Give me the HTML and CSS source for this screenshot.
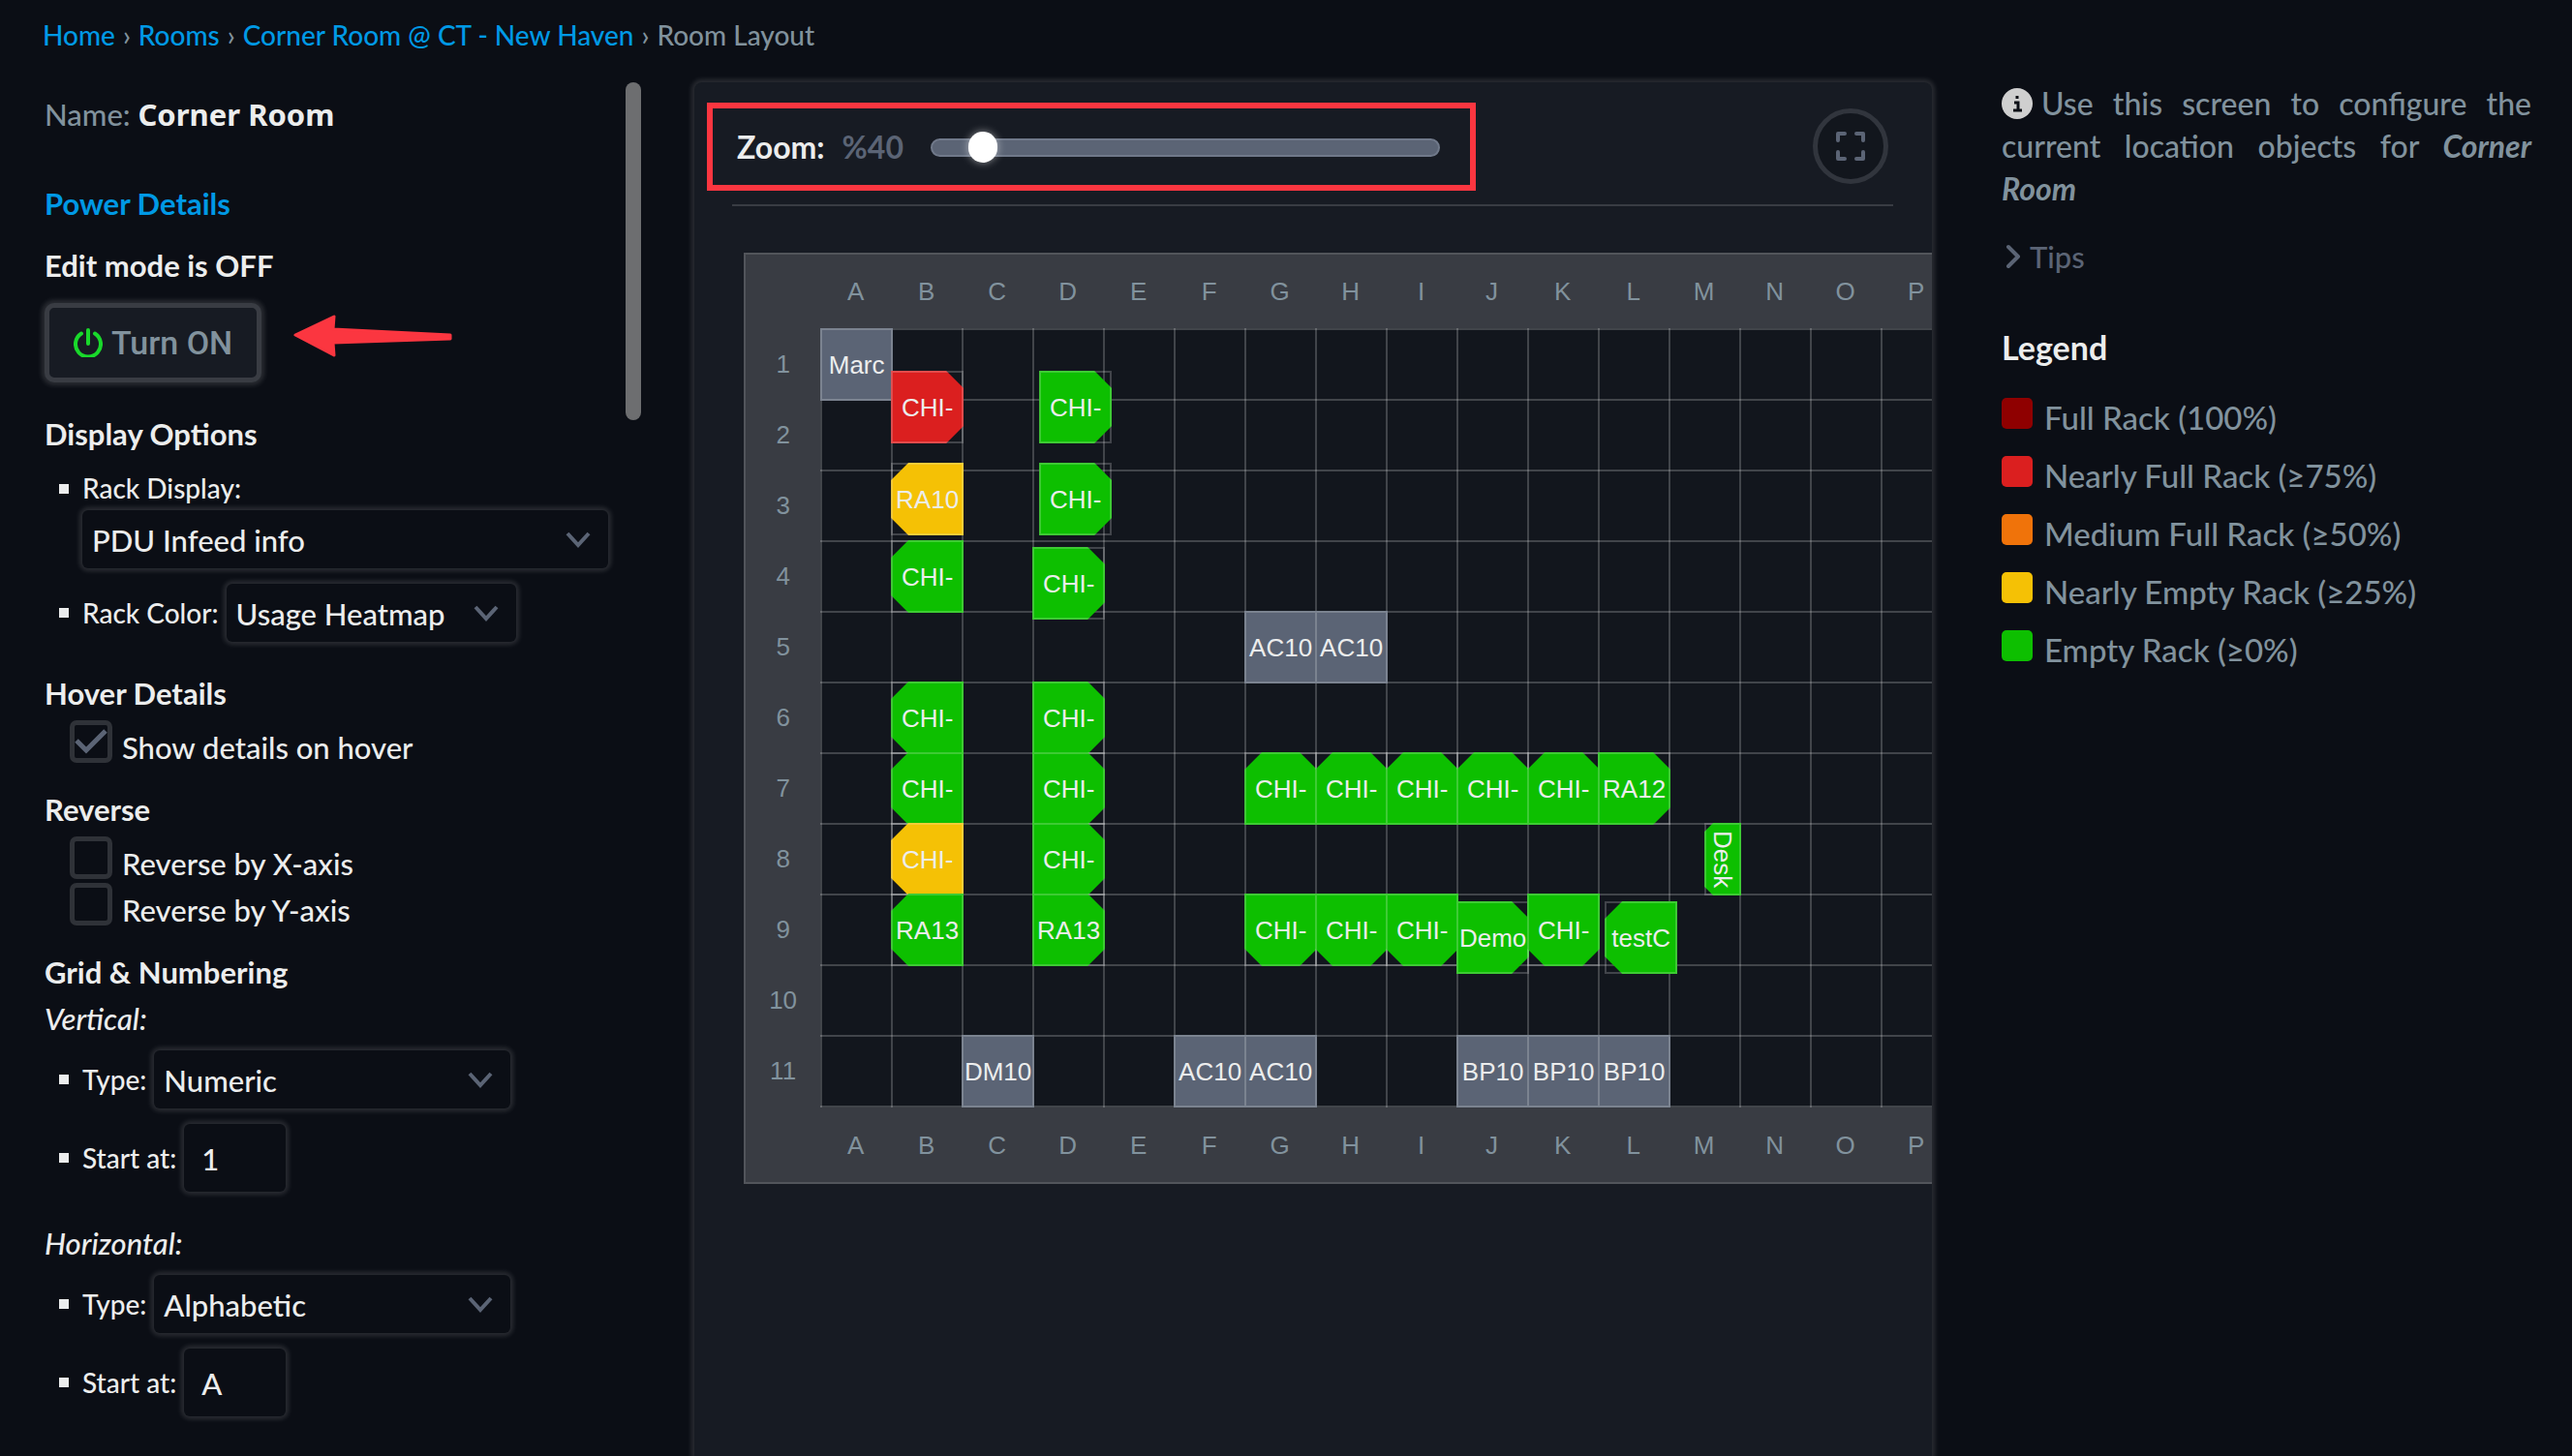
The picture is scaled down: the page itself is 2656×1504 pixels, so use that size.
FILE: index.html
```html
<!DOCTYPE html>
<html lang="en">
<head>
<meta charset="utf-8">
<title>Room Layout</title>
<link rel="stylesheet" href="styles.css">
</head>
<body>
<nav class="breadcrumb" aria-label="Breadcrumb">
  <a href="#home">Home</a><span>›</span><a href="#rooms">Rooms</a><span>›</span><a href="#room">Corner Room @ CT - New Haven</a><span>›</span><span>Room Layout</span>
</nav>

<main class="page">
  <aside class="sidebar">
    <div class="options">
      <p class="room-name">Name: <strong>Corner Room</strong></p>
      <a class="power-link" href="#power">Power Details</a>
      <p class="edit-state">Edit mode is OFF</p>
      <div class="edit-row">
        <button class="toggle-edit" type="button">
          <svg class="power-icon" viewBox="0 0 30 30" aria-hidden="true"><path d="M8 5.5a13 13 0 1 0 14 0M15 2v14"/></svg>
          Turn ON
        </button>
        <svg class="arrow" viewBox="0 0 166 44" aria-hidden="true"><path d="M2 21 42 2l-1 13 121 6v4L41 29l1 13Z"/></svg>
      </div>

      <h2>Display Options</h2>
      <div class="field stacked">
        <label for="rack-display">Rack Display:</label>
        <div class="select wide">
          <select id="rack-display"><option>PDU Infeed info</option></select>
          <svg class="chevron" viewBox="0 0 26 18" aria-hidden="true"><path d="m2 3 11 12L24 3"/></svg>
        </div>
      </div>
      <div class="field">
        <label for="rack-color">Rack Color:</label>
        <div class="select medium">
          <select id="rack-color"><option>Usage Heatmap</option></select>
          <svg class="chevron" viewBox="0 0 26 18" aria-hidden="true"><path d="m2 3 11 12L24 3"/></svg>
        </div>
      </div>

      <h2>Hover Details</h2>
      <div class="check"><input type="checkbox" id="hover" checked><label for="hover">Show details on hover</label></div>

      <h2 class="tight">Reverse</h2>
      <div class="check"><input type="checkbox" id="rev-x"><label for="rev-x">Reverse by X-axis</label></div>
      <div class="check"><input type="checkbox" id="rev-y"><label for="rev-y">Reverse by Y-axis</label></div>

      <h2 class="tight">Grid &amp; Numbering</h2>
      <h3>Vertical:</h3>
      <div class="field">
        <label for="v-type">Type:</label>
        <div class="select regular">
          <select id="v-type"><option>Numeric</option></select>
          <svg class="chevron" viewBox="0 0 26 18" aria-hidden="true"><path d="m2 3 11 12L24 3"/></svg>
        </div>
      </div>
      <div class="field">
        <label for="v-start">Start at:</label>
        <input class="start" type="text" id="v-start" value="1">
      </div>
      <h3 class="second">Horizontal:</h3>
      <div class="field">
        <label for="h-type">Type:</label>
        <div class="select regular">
          <select id="h-type"><option>Alphabetic</option></select>
          <svg class="chevron" viewBox="0 0 26 18" aria-hidden="true"><path d="m2 3 11 12L24 3"/></svg>
        </div>
      </div>
      <div class="field">
        <label for="h-start">Start at:</label>
        <input class="start" type="text" id="h-start" value="A">
      </div>
    </div>
    <div class="scroll-thumb"></div>
  </aside>

  <section class="panel" aria-label="Room layout">
    <div class="toolbar">
      <div class="zoom">
        <label for="zoom">Zoom:</label>
        <output for="zoom">%40</output>
        <input type="range" id="zoom" min="25" max="225" value="40">
      </div>
      <button class="fullscreen" type="button" aria-label="Full screen">
        <svg viewBox="0 0 30 30" aria-hidden="true"><path d="M2 9V2h7M21 2h7v7M28 21v7h-7M9 28H2v-7"/></svg>
      </button>
    </div>

    <div class="plan">
      <div class="axis columns"><span>A</span><span>B</span><span>C</span><span>D</span><span>E</span><span>F</span><span>G</span><span>H</span><span>I</span><span>J</span><span>K</span><span>L</span><span>M</span><span>N</span><span>O</span><span>P</span></div>
      <div class="axis rows"><span>1</span><span>2</span><span>3</span><span>4</span><span>5</span><span>6</span><span>7</span><span>8</span><span>9</span><span>10</span><span>11</span></div>
      <div class="floor">
        <div class="item device" style="left:0px;top:0px"><span>Marc</span></div>
        <div class="item red east" style="left:73px;top:44px"><span>CHI-</span></div>
        <div class="item green east" style="left:226px;top:44px"><span>CHI-</span></div>
        <div class="item yellow west" style="left:73px;top:139px"><span>RA10</span></div>
        <div class="item green east" style="left:226px;top:139px"><span>CHI-</span></div>
        <div class="item green west" style="left:73px;top:219px"><span>CHI-</span></div>
        <div class="item green east" style="left:219px;top:226px"><span>CHI-</span></div>
        <div class="item device" style="left:438px;top:292px"><span>AC10</span></div>
        <div class="item device" style="left:511px;top:292px"><span>AC10</span></div>
        <div class="item green west" style="left:73px;top:365px"><span>CHI-</span></div>
        <div class="item green west" style="left:73px;top:438px"><span>CHI-</span></div>
        <div class="item yellow west" style="left:73px;top:511px"><span>CHI-</span></div>
        <div class="item green west" style="left:73px;top:584px"><span>RA13</span></div>
        <div class="item green east" style="left:219px;top:365px"><span>CHI-</span></div>
        <div class="item green east" style="left:219px;top:438px"><span>CHI-</span></div>
        <div class="item green east" style="left:219px;top:511px"><span>CHI-</span></div>
        <div class="item green east" style="left:219px;top:584px"><span>RA13</span></div>
        <div class="item green north" style="left:438px;top:438px"><span>CHI-</span></div>
        <div class="item green north" style="left:511px;top:438px"><span>CHI-</span></div>
        <div class="item green north" style="left:584px;top:438px"><span>CHI-</span></div>
        <div class="item green north" style="left:657px;top:438px"><span>CHI-</span></div>
        <div class="item green north" style="left:730px;top:438px"><span>CHI-</span></div>
        <div class="item green east" style="left:803px;top:438px"><span>RA12</span></div>
        <div class="item green west narrow" style="left:913px;top:511px"><span>Desk</span></div>
        <div class="item green south" style="left:438px;top:584px"><span>CHI-</span></div>
        <div class="item green south" style="left:511px;top:584px"><span>CHI-</span></div>
        <div class="item green south" style="left:584px;top:584px"><span>CHI-</span></div>
        <div class="item green east" style="left:657px;top:592px"><span>Demo</span></div>
        <div class="item green south" style="left:730px;top:584px"><span>CHI-</span></div>
        <div class="item green west" style="left:810px;top:592px"><span>testC</span></div>
        <div class="item device" style="left:146px;top:730px"><span>DM10</span></div>
        <div class="item device" style="left:365px;top:730px"><span>AC10</span></div>
        <div class="item device" style="left:438px;top:730px"><span>AC10</span></div>
        <div class="item device" style="left:657px;top:730px"><span>BP10</span></div>
        <div class="item device" style="left:730px;top:730px"><span>BP10</span></div>
        <div class="item device" style="left:803px;top:730px"><span>BP10</span></div>
      </div>
      <div class="axis columns"><span>A</span><span>B</span><span>C</span><span>D</span><span>E</span><span>F</span><span>G</span><span>H</span><span>I</span><span>J</span><span>K</span><span>L</span><span>M</span><span>N</span><span>O</span><span>P</span></div>
    </div>
  </section>

  <aside class="help">
    <p class="intro"><svg class="info" viewBox="0 0 32 32" aria-hidden="true"><circle cx="16" cy="16" r="16"/><path d="M13 15h4v8M12 23h9M16 8v3"/></svg>Use this screen to configure the current location objects for <em>Corner Room</em></p>
    <button class="tips" type="button"><svg viewBox="0 0 16 26" aria-hidden="true"><path d="m3 3 10 10L3 23"/></svg>Tips</button>
    <h2>Legend</h2>
    <ul class="legend">
      <li class="full">Full Rack (100%)</li>
      <li class="nearly-full">Nearly Full Rack (≥75%)</li>
      <li class="medium-full">Medium Full Rack (≥50%)</li>
      <li class="nearly-empty">Nearly Empty Rack (≥25%)</li>
      <li class="empty">Empty Rack (≥0%)</li>
    </ul>
  </aside>
</main>
</body>
</html>
```
FILE: styles.css
```css
:root {
  --bg: #0b0e15;
  --panel: #171b23;
  --edge: #393c43;
  --text: #eceded;
  --muted: #81929d;
  --slate: #5b6475;
  --link: #0099e5;
  --mark: #fb3640;
  --green: #0dbf00;
  --yellow: #f5c105;
  --red: #db1f1f;
  --line: rgba(255, 255, 255, 0.2);
  --glow: 0 0 5px 3px rgba(255, 255, 255, 0.13);
  --cell: 73px;
}

* { box-sizing: border-box; }

html, body { height: 100%; }

body {
  margin: 0;
  overflow: hidden;
  display: flex;
  flex-direction: column;
  background: var(--bg);
  color: var(--text);
  font: 500 31px/48px Lato, Roboto, "Liberation Sans", sans-serif;
}

p, h2, h3, ul { margin: 0; padding: 0; }
h2 { font-size: 31px; line-height: 48px; font-weight: 700; }
h3 { font-size: 31px; line-height: 48px; font-weight: 500; font-style: italic; }
a { color: var(--link); text-decoration: none; }
button, select, input { font: inherit; color: inherit; margin: 0; }
svg { display: block; fill: none; }

.breadcrumb {
  display: flex;
  gap: 8px;
  flex: none;
  padding: 16px 44px 21px;
  font-size: 28px;
  line-height: 40px;
  color: var(--muted);
}

.page {
  flex: 1;
  min-height: 0;
  display: grid;
  grid-template-columns: 27% minmax(0, 1fr) 661px;
  padding-top: 8px;
}

/* Sidebar */
.sidebar { display: flex; min-height: 0; padding-left: 46px; padding-right: 55px; }
.options { flex: 1; min-width: 0; display: flex; flex-direction: column; align-items: flex-start; }
.scroll-thumb { flex: none; width: 16px; height: 349px; border-radius: 8px; background: #6d6e70; }

.room-name { padding-top: 9px; color: var(--muted); }
.room-name strong { color: var(--text); font: 700 31px/48px "Noto Sans", sans-serif; }
.power-link { margin-top: 44px; font-weight: 700; }
.edit-state { margin-top: 16px; font-weight: 700; }
.edit-row { display: flex; align-items: center; gap: 33px; margin-top: 15px; }

.toggle-edit {
  display: flex;
  align-items: center;
  gap: 9px;
  height: 82px;
  padding: 0 25px;
  border: 5px solid var(--edge);
  border-radius: 10px;
  background: var(--panel);
  box-shadow: var(--glow);
  color: var(--muted);
  font: 500 34px/48px Roboto, sans-serif;
}
.power-icon { width: 30px; height: 30px; stroke: #19d92b; stroke-width: 4; stroke-linecap: round; }
.arrow { width: 166px; height: 44px; margin-bottom: 14px; fill: var(--mark); stroke: var(--mark); stroke-width: 3; stroke-linejoin: round; }

.options h2 { margin-top: 29px; }
.options h2.tight { margin-top: 24px; }
.options h3.second { margin-top: 29px; }

.field {
  display: flex;
  align-items: center;
  gap: 8px;
  padding-left: 39px;
  margin-top: 16px;
  font-size: 28px;
  line-height: 36px;
  position: relative;
}
h3 + .field { margin-top: 9px; }
.field::before {
  content: "";
  position: absolute;
  left: 15px;
  top: calc(50% - 5px);
  width: 10px;
  height: 10px;
  background: var(--text);
}
.field.stacked { flex-direction: column; align-items: flex-start; gap: 5px; margin-top: 14px; }
.field.stacked::before { top: 14px; }

.select { display: grid; align-items: center; height: 60px; }
.select > * { grid-area: 1 / 1; }
.select select {
  appearance: none;
  width: 100%;
  height: 100%;
  padding: 2px 10px 0;
  border: 0;
  border-radius: 6px;
  background: var(--bg);
  box-shadow: var(--glow);
  font-size: 31px;
}
.wide { width: 543px; }
.medium { width: 299px; }
.regular { width: 368px; }
.chevron { justify-self: end; width: 26px; height: 18px; margin-right: 18px; stroke: var(--slate); stroke-width: 4; pointer-events: none; }

.start {
  width: 105px;
  height: 70px;
  padding: 2px 18px 0;
  border: 0;
  border-radius: 6px;
  background: var(--bg);
  box-shadow: var(--glow);
  font-size: 31px;
}

.check { display: flex; align-items: flex-end; gap: 10px; height: 44px; padding-left: 26px; margin-top: 4px; }
.check label { line-height: 32px; }
.check input {
  appearance: none;
  width: 44px;
  height: 44px;
  border: 5px solid #2f3238;
  border-radius: 7px;
  background: none;
}
.check input:checked {
  background: url('data:image/svg+xml,<svg xmlns="http://www.w3.org/2000/svg" viewBox="0 0 34 34"><path d="m2 16 10 10L32 6" fill="none" stroke="%235b6475" stroke-width="5"/></svg>') center / 34px no-repeat;
}

/* Room panel */
.panel {
  min-width: 0;
  min-height: 0;
  overflow: hidden;
  border-radius: 8px 8px 0 0;
  background: var(--panel);
  box-shadow: var(--glow);
}
.toolbar {
  display: flex;
  align-items: center;
  justify-content: space-between;
  height: 128px;
  margin: 0 40px 0 39px;
  padding: 6px 5px 0 0;
  border-bottom: 2px solid var(--edge);
}
.zoom {
  display: flex;
  align-items: center;
  gap: 18px;
  width: 794px;
  height: 91px;
  margin-left: -26px;
  padding: 2px 31px 0 25px;
  border: 6px solid var(--mark);
  font-size: 32px;
  font-weight: 700;
}
.zoom output { color: var(--slate); }
.zoom input {
  appearance: none;
  flex: 1;
  min-width: 0;
  margin-left: 10px;
  height: 19px;
  border: 2px solid #70798a;
  border-radius: 10px;
  background: var(--slate);
}
.zoom input::-webkit-slider-thumb {
  appearance: none;
  width: 30px;
  height: 32px;
  border-radius: 15px;
  background: #fff;
  box-shadow: 0 0 8px rgba(255, 255, 255, 0.5);
}
.fullscreen {
  display: grid;
  place-items: center;
  width: 78px;
  height: 78px;
  padding: 0;
  border: 5px solid #31353d;
  border-radius: 50%;
  background: #12161d;
}
.fullscreen svg { width: 30px; height: 30px; stroke: var(--slate); stroke-width: 4; stroke-linecap: round; stroke-linejoin: round; }

.plan {
  display: grid;
  grid-template: 76px auto 77px / 77px max-content;
  margin: 48px 0 0 51px;
  border: 2px solid #52555b;
  width: max-content;
  background: var(--edge);
  color: var(--muted);
  font: 26px/30px "Liberation Sans", Arial, sans-serif;
}
.axis { display: grid; place-items: center; }
.columns { grid-column: 2; grid-template-columns: repeat(16, var(--cell)); }
.rows { grid-template-rows: repeat(11, var(--cell)); }
.floor {
  position: relative;
  width: calc(16 * var(--cell));
  height: calc(11 * var(--cell) + 2px);
  background:
    repeating-linear-gradient(90deg, var(--line) 0 2px, transparent 2px var(--cell)),
    repeating-linear-gradient(var(--line) 0 2px, transparent 2px var(--cell)),
    #12161d;
}
.item {
  position: absolute;
  display: grid;
  place-items: center;
  width: 75px;
  height: 75px;
  color: var(--text);
  --cut: 18px;
}
.item::before, .item::after { content: ""; position: absolute; inset: 0; }
.item::before { background: var(--fill); }
.item::after { border: 2px solid rgba(255, 255, 255, 0.2); }
.item span { position: relative; z-index: 1; white-space: nowrap; }
.device { --fill: var(--slate); }
.green { --fill: var(--green); }
.yellow { --fill: var(--yellow); }
.red { --fill: var(--red); }
.east::before { clip-path: polygon(0 0, calc(100% - var(--cut)) 0, 100% var(--cut), 100% calc(100% - var(--cut)), calc(100% - var(--cut)) 100%, 0 100%); }
.west::before { clip-path: polygon(var(--cut) 0, 100% 0, 100% 100%, var(--cut) 100%, 0 calc(100% - var(--cut)), 0 var(--cut)); }
.north::before { clip-path: polygon(var(--cut) 0, calc(100% - var(--cut)) 0, 100% var(--cut), 100% 100%, 0 100%, 0 var(--cut)); }
.south::before { clip-path: polygon(0 0, 100% 0, 100% calc(100% - var(--cut)), calc(100% - var(--cut)) 100%, var(--cut) 100%, 0 calc(100% - var(--cut))); }
.narrow { width: 38px; --cut: 9px; }
.narrow span { writing-mode: vertical-rl; }

/* Help column */
.help { padding: 0 42px 0 72px; color: var(--muted); }
.intro { font-size: 32px; line-height: 44px; text-align: justify; }
.intro em { font-weight: 700; }
.info { display: inline-block; width: 32px; height: 32px; margin-right: 9px; vertical-align: -4px; }
.info circle { fill: #cfcfcf; }
.info path { stroke: var(--bg); stroke-width: 3; }
.tips {
  display: flex;
  align-items: center;
  gap: 9px;
  margin-top: 24px;
  padding: 0 0 0 4px;
  border: 0;
  background: none;
  color: var(--slate);
}
.tips svg { width: 16px; height: 26px; stroke: var(--slate); stroke-width: 4; stroke-linecap: round; stroke-linejoin: round; }
.help h2 { margin-top: 46px; font-size: 34px; color: var(--text); }
.legend { list-style: none; margin-top: 15px; font-size: 33px; }
.legend li { display: flex; align-items: center; gap: 12px; height: 60px; padding-top: 6px; }
.legend li::before { content: ""; flex: none; width: 32px; height: 32px; margin-bottom: 8px; border-radius: 5px; background: var(--fill); }
.full { --fill: #8f0000; }
.nearly-full { --fill: var(--red); }
.medium-full { --fill: #f0730a; }
.nearly-empty { --fill: var(--yellow); }
.empty { --fill: var(--green); }
```
